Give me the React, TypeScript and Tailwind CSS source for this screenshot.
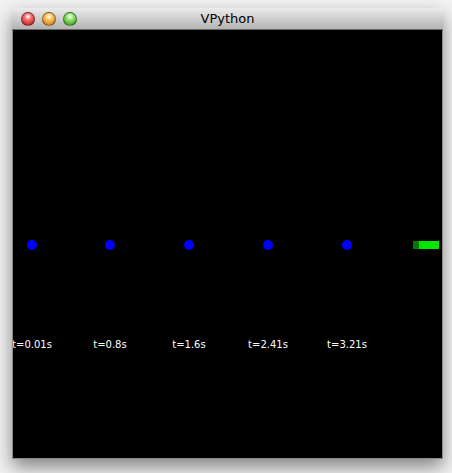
import React from 'react';

// centers in page coords: 32, 110, 189, 268, 347; canvas starts at x=13
const dots = [
  { x: 19, label: 't=0.01s' },
  { x: 97, label: 't=0.8s' },
  { x: 176, label: 't=1.6s' },
  { x: 255, label: 't=2.41s' },
  { x: 334, label: 't=3.21s' },
];

const Light = ({ from, to }: { from: string; to: string }) => (
  <div
    className="w-[14px] h-[14px] rounded-full border border-black/40"
    style={{ background: `radial-gradient(circle at 50% 30%, #fff 0%, ${from} 35%, ${to} 100%)` }}
  />
);

export default function App() {
  return (
    <div className="w-[452px] h-[473px] bg-[#f2f2f2] pt-[8px] pl-[12px]">
      <div className="w-[431px] h-[451px] flex flex-col rounded-t-[5px] shadow-[0_8px_18px_rgba(0,0,0,0.45)]">
        {/* title bar */}
        <div className="relative h-[22px] flex items-center gap-[7px] pl-[9px] rounded-t-[5px] bg-gradient-to-b from-[#ebebeb] to-[#b3b3b3] border-b border-[#6a6a6a]">
          <Light from="#f46a6a" to="#b3100f" />
          <Light from="#f9c25a" to="#c66a0c" />
          <Light from="#8ee36b" to="#2f8a14" />
          <span className="absolute left-0 right-0 text-center text-[13px] text-black font-['DejaVu_Sans',sans-serif] pointer-events-none">
            VPython
          </span>
        </div>
        {/* scene */}
        <div className="relative flex-1 bg-black border-x border-b border-[#8a8a8a] overflow-hidden">
          {dots.map((d) => (
            <React.Fragment key={d.label}>
              <div
                className="absolute top-[210px] w-[10px] h-[10px] -ml-[5px] rounded-full bg-[#0000ff]"
                style={{ left: d.x }}
              />
              <div
                className="absolute top-[307px] w-[60px] -ml-[30px] text-center text-[10px] text-white font-['DejaVu_Sans',sans-serif]"
                style={{ left: d.x }}
              >
                {d.label}
              </div>
            </React.Fragment>
          ))}
          <div className="absolute top-[211px] left-[400px] flex h-[8px]">
            <div className="w-[6px] bg-[#007a00]" />
            <div className="w-[20px] bg-[#00e600]" />
          </div>
        </div>
      </div>
    </div>
  );
}
